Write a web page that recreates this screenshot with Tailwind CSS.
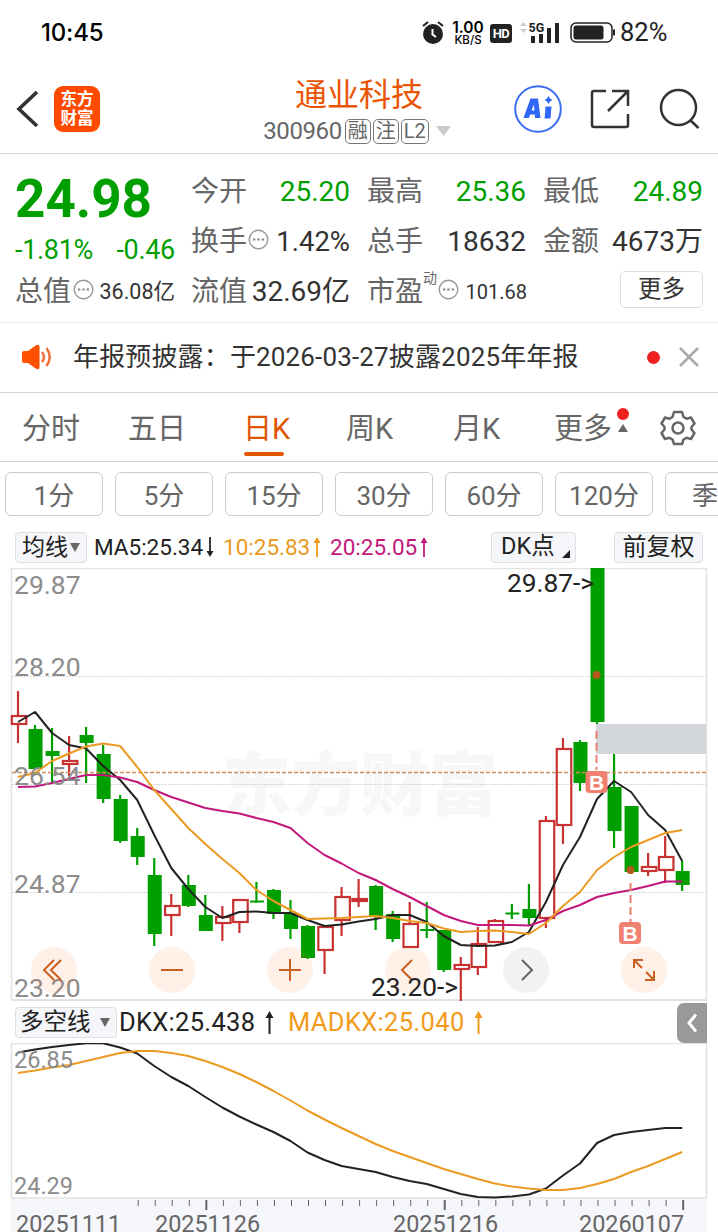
<!DOCTYPE html>
<html lang="zh-CN">

<head>
    <meta charset="UTF-8" />
    <meta name="viewport" content="width=device-width, initial-scale=1.0" />
    <title>通业科技 300960</title>
    <script src="https://cdn.jsdelivr.net/npm/@tailwindcss/browser@4"></script>
    <style>
        body {
            font-family: Roboto, 'Noto Sans CJK SC', sans-serif;
        }
    </style>
</head>

<body class="bg-white w-[718px] h-[1232px] overflow-hidden text-[#333] whitespace-nowrap">
    <!-- status bar -->
    <div class="h-[66px] flex items-center pl-[41px] text-black">
        <span class="font-['Inter'] text-[24px] font-medium w-[380px] leading-none tracking-[-0.2px]">10:45</span>
        <svg class="w-[24px] h-[26px]" viewBox="0 0 24 26">
            <circle cx="12" cy="14" r="10" fill="#222" />
            <path d="M2 6 L7 2 M22 6 L17 2" stroke="#222" stroke-width="2.2" fill="none" />
            <path d="M11.5 9 V14.5 L15 17" stroke="#fff" stroke-width="2" fill="none" />
        </svg>
        <div class="w-[32px] ml-[7px] flex flex-col items-center font-['Inter'] font-semibold">
            <span class="text-[15.5px] leading-[13px]">1.00</span>
            <span class="text-[11.5px] leading-[12px] font-medium">KB/S</span>
        </div>
        <div class="ml-[6px] w-[22px] h-[19px] rounded-[3px] bg-[#222] text-white text-[13px] leading-[20px] font-bold text-center tracking-[-0.5px]">HD</div>
        <svg class="w-[42px] h-[26px] ml-[8px] mb-[2px]" viewBox="0 0 42 26">
            <path d="M0 7 L3.500 3 L7 7Z M0 10 L3.500 14 L7 10Z" fill="#ccc" />
            <path d="M11 17h4v7h-4z M19 15h4v9h-4z M27 9h4v15h-4z M35 4h4v20h-4z" fill="#222" />
            <text x="8.500" y="12.500" font-size="12.500" font-weight="700" font-family="Roboto" fill="#222" stroke="#fff" stroke-width="2" paint-order="stroke">5G</text>
        </svg>
        <svg class="w-[46px] h-[22px] ml-[8px]" viewBox="0 0 46 22">
            <rect x="1" y="1" width="41" height="19" rx="5" fill="none" stroke="#222" stroke-width="1.500" />
            <rect x="3.500" y="3.500" width="30" height="14" rx="2.500" fill="#222" />
            <path d="M44 7.500v6" stroke="#222" stroke-width="2" />
        </svg>
        <span class="ml-[4px] text-[25.500px] leading-none text-[#222]">82%</span>
    </div>

    <!-- header -->
    <header class="h-[88px] flex border-b border-[#d4d4d4]">
        <div class="w-[202px] flex items-center pl-[16px] pb-[2px]">
            <svg class="w-[24px] h-[38px]" viewBox="0 0 24 38">
                <path d="M21 2 L3 19 L21 36" fill="none" stroke="#333" stroke-width="3.600" />
            </svg>
            <div class="ml-[14px] w-[46px] h-[46px] rounded-[9px] bg-[#ff4a00] text-white font-bold text-[16.500px] leading-[19px] text-center pt-[4px]">东方<br />财富</div>
        </div>
        <div class="w-[312px] flex flex-col items-center pt-[10px]">
            <h1 class="text-[32px] leading-[38px] text-[#e95504] ml-[2px]">通业科技</h1>
            <div class="flex items-center mt-[4px] text-[#666] gap-[2px] mr-[2px]">
                <span class="text-[24px] leading-[26px] tracking-[-0.400px] mr-[1px]">300960</span>
                <span class="w-[26px] h-[25px] border border-[#777] rounded-[5px] text-[20px] leading-[22px] text-center">融</span>
                <span class="w-[26px] h-[25px] border border-[#777] rounded-[5px] text-[20px] leading-[22px] text-center">注</span>
                <span class="w-[28px] h-[25px] border border-[#777] rounded-[5px] text-[20px] leading-[23px] text-center">L2</span>
                <svg class="w-[15px] h-[10px] ml-[5px]" viewBox="0 0 15 10"><path d="M0 0h15L7.500 10z" fill="#ccc" /></svg>
            </div>
        </div>
        <div class="flex items-center pb-[2px]">
            <svg class="w-[48px] h-[48px]" viewBox="0 0 48 48">
                <circle cx="24" cy="24" r="22.800" fill="none" stroke="#3b6cf0" stroke-width="2" />
                <path d="M9.500 33 L16.500 13.500 H24 L26.500 33 H21 L20.700 29.500 H16.200 L14.800 33Z M17.500 25.500 H20.400 L20 19.500Z" fill="#2f66f6" fill-rule="evenodd" />
                <path d="M31.500 21.500 H37.500 L36.500 33.500 H30.500 L31 29Z" fill="#2f66f6" />
                <path d="M34.500 11 L36 13.500 L38.500 15 L36 16.500 L34.500 19 L33 16.500 L30.500 15 L33 13.500Z" fill="#2f66f6" />
            </svg>
            <svg class="w-[40px] h-[40px] ml-[28px]" viewBox="0 0 40 40" fill="none" stroke="#333" stroke-width="2.500">
                <path d="M16 2 H4 Q2 2 2 4 V36 Q2 38 4 38 H36 Q38 38 38 36 V25 M22 2 H38 V17 M38 2 L18 22" />
            </svg>
            <svg class="w-[41px] h-[41px] ml-[29px]" viewBox="0 0 41 41" fill="none" stroke="#333" stroke-width="2.500">
                <circle cx="19.500" cy="19.500" r="17.500" />
                <path d="M31 32 L39.500 40" />
            </svg>
        </div>
    </header>

    <!-- quote -->
    <section class="h-[169px] flex border-b border-[#ececec] pl-[15px]">
        <div class="w-[176px]">
            <div class="text-[53px] leading-[50px] pt-[20px] font-bold text-[#009f00]">24.98</div>
            <div class="flex justify-between w-[160px] text-[27px] leading-[30px] pt-[11px] text-[#009f00] tracking-[-0.300px]">
                <span>-1.81%</span><span>-0.46</span>
            </div>
            <div class="flex items-center justify-between w-[160px] h-[40px] mt-[7px]">
                <span class="text-[28px] text-[#666]">总值</span>
                <svg class="w-[21px] h-[21px] -ml-[3px] mb-[6px]" viewBox="0 0 21 21"><circle cx="10.500" cy="10.500" r="9.300" fill="none" stroke="#999" stroke-width="1.400" /><path d="M5 10.500h2.400M9.300 10.500h2.400M13.600 10.500h2.400" stroke="#888" stroke-width="2" /></svg>
                <span class="text-[21.500px]">36.08亿</span>
            </div>
        </div>
        <div class="w-[159px] mr-[17px] pt-[13px] text-[28px] leading-[50px]">
            <div class="flex justify-between h-[50px]"><span class="text-[#666]">今开</span><span class="text-[#009f00]">25.20</span></div>
            <div class="flex justify-between items-center h-[50px]">
                <span class="text-[#666]">换手</span>
                <svg class="w-[21px] h-[21px] -ml-[6px] mb-[6px]" viewBox="0 0 21 21"><circle cx="10.500" cy="10.500" r="9.300" fill="none" stroke="#999" stroke-width="1.400" /><path d="M5 10.500h2.400M9.300 10.500h2.400M13.600 10.500h2.400" stroke="#888" stroke-width="2" /></svg>
                <span class="text-[27.500px]">1.42%</span>
            </div>
            <div class="flex justify-between h-[50px]"><span class="text-[#666]">流值</span><span>32.69亿</span></div>
        </div>
        <div class="w-[159px] mr-[17px] pt-[13px] text-[28px] leading-[50px]">
            <div class="flex justify-between h-[50px]"><span class="text-[#666]">最高</span><span class="text-[#009f00]">25.36</span></div>
            <div class="flex justify-between h-[50px]"><span class="text-[#666]">总手</span><span>18632</span></div>
            <div class="flex items-center h-[50px]">
                <span class="text-[#666]">市盈</span>
                <span class="text-[14px] leading-[20px] text-[#666] mb-[28px]">动</span>
                <svg class="w-[21px] h-[21px] mb-[6px] ml-[1px]" viewBox="0 0 21 21"><circle cx="10.500" cy="10.500" r="9.300" fill="none" stroke="#999" stroke-width="1.400" /><path d="M5 10.500h2.400M9.300 10.500h2.400M13.600 10.500h2.400" stroke="#888" stroke-width="2" /></svg>
                <span class="text-[20px] ml-auto -mr-[1px]">101.68</span>
            </div>
        </div>
        <div class="w-[160px] pt-[13px] text-[28px] leading-[50px]">
            <div class="flex justify-between h-[50px]"><span class="text-[#666]">最低</span><span class="text-[#009f00]">24.89</span></div>
            <div class="flex justify-between h-[50px]"><span class="text-[#666]">金额</span><span>4673万</span></div>
            <div class="ml-auto mt-[4px] w-[83px] h-[37px] rounded-[5px] border border-[#ddd] text-[23.500px] leading-[34px] text-center">更多</div>
        </div>
    </section>

    <!-- notice -->
    <section class="h-[70px] flex items-center border-b border-[#d4d4d4] pl-[21px] pr-[19px] pb-[1px]">
        <svg class="w-[31px] h-[26px]" viewBox="0 0 31 26">
            <path d="M3 7 H7 L14 2 Q18.500 -1 18.500 3 V23 Q18.500 27 14 24 L7 19 H3 Q1 19 1 17 V9 Q1 7 3 7Z" fill="#ff5000" />
            <path d="M21 8 Q25 13 21 18 M25.500 4 Q32 13 25.500 22" fill="none" stroke="#f2703a" stroke-width="2.500" />
        </svg>
        <span class="ml-[21px] text-[26px] leading-none tracking-[0.150px]">年报预披露：于2026-03-27披露2025年年报</span>
        <i class="ml-auto w-[13px] h-[13px] rounded-full bg-[#f02020]"></i>
        <svg class="w-[20px] h-[20px] ml-[19px]" viewBox="0 0 20 20"><path d="M1 1L19 19M19 1L1 19" stroke="#aaa" stroke-width="2.500" /></svg>
    </section>

    <!-- chart tabs -->
    <nav class="h-[69px] flex items-center border-b border-[#d4d4d4] text-[29px] leading-none text-[#666] pl-[22px] pt-[5px]">
        <span class="w-[106px]">分时</span>
        <span class="w-[115px]">五日</span>
        <span class="w-[103px] h-[58px] flex flex-col justify-between text-[#e05500] pt-[14px] pb-[3px]">日K<i class="w-[40px] h-[4px] rounded-full bg-[#e05500] ml-[1px]"></i></span>
        <span class="w-[107px]">周K</span>
        <span class="w-[101px]">月K</span>
        <span>更多</span>
        <div class="ml-[4px] w-[14px] flex flex-col items-center gap-[4px] mb-[20px]">
            <i class="w-[12px] h-[12px] rounded-full bg-[#f02020]"></i>
            <svg class="w-[10px] h-[8px]" viewBox="0 0 10 8"><path d="M0 8h10L5 0z" fill="#666" /></svg>
        </div>
        <svg class="w-[36px] h-[36px] ml-[30px] mb-[4px]" viewBox="0 0 36 36" fill="none" stroke="#666" stroke-width="2.500" stroke-linejoin="round">
            <path d="M14 2 H22 L23.500 7 L26.500 8.700 L31 7.500 L34.500 13.500 L31.500 17 V19.500 L34.500 23 L31 29 L26.500 27.800 L23.500 29.500 L22 34 H14 L12.500 29.500 L9.500 27.800 L5 29 L1.500 23 L4.500 19.500 V17 L1.500 13.500 L5 7.500 L9.500 8.700 L12.500 7Z" />
            <circle cx="18" cy="18" r="5.500" />
        </svg>
    </nav>

    <!-- minute periods -->
    <div class="flex gap-[12px] pl-[5px] pt-[10px] h-[64px] text-[26px] leading-[46px] text-[#666] text-center overflow-hidden">
        <span class="w-[98px] h-[44px] shrink-0 border border-[#ccc] rounded-[6px]">1分</span>
        <span class="w-[98px] h-[44px] shrink-0 border border-[#ccc] rounded-[6px]">5分</span>
        <span class="w-[98px] h-[44px] shrink-0 border border-[#ccc] rounded-[6px]">15分</span>
        <span class="w-[98px] h-[44px] shrink-0 border border-[#ccc] rounded-[6px]">30分</span>
        <span class="w-[98px] h-[44px] shrink-0 border border-[#ccc] rounded-[6px]">60分</span>
        <span class="w-[98px] h-[44px] shrink-0 border border-[#ccc] rounded-[6px]">120分</span>
        <span class="w-[98px] h-[44px] shrink-0 border border-[#ccc] rounded-[6px] text-left pl-[26px]">季K</span>
    </div>

    <!-- moving averages -->
    <div class="h-[42px] flex items-center pl-[15px] text-[22.500px] leading-none text-[#222]">
        <div class="w-[72px] h-[31px] flex items-center border border-[#dedfe3] rounded-[4px] bg-[#f5f6f9] pl-[6px] text-[23px]">均线
            <svg class="w-[10px] h-[9px] ml-[2px]" viewBox="0 0 10 9"><path d="M0 0h10L5 9z" fill="#666" /></svg>
        </div>
        <span class="ml-[7px] w-[112px]">MA5:25.34</span>
        <svg class="w-[8px] h-[20px]" viewBox="0 0 8 20"><path d="M4 0v17" stroke="#222" stroke-width="1.800" /><path d="M0.500 14h7L4 20z" fill="#222" /></svg>
        <span class="ml-[9px] w-[90px] text-[#e89a1e]">10:25.83</span>
        <svg class="w-[8px] h-[20px]" viewBox="0 0 8 20"><path d="M4 20V3" stroke="#f29a1a" stroke-width="1.800" /><path d="M0.500 6h7L4 0z" fill="#f29a1a" /></svg>
        <span class="ml-[9px] w-[90px] text-[#c2187c]">20:25.05</span>
        <svg class="w-[8px] h-[20px]" viewBox="0 0 8 20"><path d="M4 20V3" stroke="#c2187c" stroke-width="1.800" /><path d="M0.500 6h7L4 0z" fill="#c2187c" /></svg>
        <div class="ml-[63px] w-[85px] h-[31px] flex items-center border border-[#dedfe3] rounded-[4px] bg-[#f5f6f9] pl-[9px] text-[23.500px]">DK点
            <svg class="w-[8px] h-[8px] ml-[7px] mt-[13px]" viewBox="0 0 8 8"><path d="M8 0v8H0z" fill="#222" /></svg>
        </div>
        <div class="ml-[38px] w-[89px] h-[31px] leading-[29px] border border-[#dedfe3] rounded-[4px] bg-[#f5f6f9] text-center text-[24px]">前复权</div>
    </div>

    <!-- daily candles, y runs in page units so both panes share one scale -->
    <svg id="kline" class="block w-[718px] h-[433px]" viewBox="0 568 718 433" font-family="Roboto, 'Noto Sans CJK SC', sans-serif">
        <text x="222" y="810" font-size="69" font-weight="900" fill="#f7f7f7">东方财富</text>
        <path d="M11.500 1000V568.500H706.500V1000" fill="none" stroke="#e2e2e2" stroke-width="1.500" />
        <path d="M11 1000H707" stroke="#e2e2e2" stroke-width="2" />
        <path d="M12 676.500H706M12 784.500H706M12 892.500H706" stroke="#ccc" stroke-dasharray="1.500 1.500" />
        <rect x="596" y="724" width="110" height="30" fill="#d3d6db" />
        <g id="candles"></g>
        <path d="M12 772.500H706" stroke="#c98f5c" stroke-width="1.300" stroke-dasharray="4 2" />
        <g id="averages" fill="none" stroke-width="2" stroke-linejoin="round"></g>
        <g font-size="26.500" fill="#8c8c8c">
            <text x="14" y="594">29.87</text>
            <text x="14" y="676">28.20</text>
            <text x="14" y="785">26.54</text>
            <text x="14" y="893">24.87</text>
            <text x="14" y="997">23.20</text>
        </g>
        <g stroke="#e9806f" stroke-width="2" stroke-dasharray="8 4">
            <path d="M596.500 731V770M630.500 883V922" />
        </g>
        <circle cx="596.500" cy="675" r="4" fill="#b3591c" />
        <circle cx="630.500" cy="870" r="4" fill="#b3591c" />
        <g font-size="21" font-weight="700" fill="#fff" text-anchor="middle" font-family="Liberation Sans">
            <rect x="585.500" y="771" width="22" height="22" rx="4" fill="#f08070" />
            <text x="596.500" y="789.500">B</text>
            <rect x="619" y="922" width="22" height="22" rx="4" fill="#f08070" />
            <text x="630" y="940.500">B</text>
        </g>
        <g fill="#ff6a1a" fill-opacity="0.100">
            <circle cx="54" cy="970" r="23" />
            <circle cx="172" cy="970" r="23" />
            <circle cx="290" cy="970" r="23" />
            <circle cx="408" cy="970" r="23" />
            <circle cx="644" cy="970" r="23" />
        </g>
        <circle cx="526" cy="970" r="23" fill="#f2f2f2" />
        <g fill="none" stroke="#c9601f" stroke-width="2">
            <path d="M54 960L44 970L54 980M61 960L51 970L61 980" />
            <path d="M161 970H183M279 970H301M290 959V981" />
            <path d="M412 960L402 970L412 980" />
            <path d="M634 968V960H643M634 960L642 968M646 972L654 980M654 971V980H645" />
            <path d="M522 960L532 970L522 980" stroke="#666" />
        </g>
        <g font-size="26.300" fill="#222">
            <text x="507" y="592">29.87-&gt;</text>
            <text x="371" y="996">23.20-&gt;</text>
        </g>
    </svg>

    <!-- DKX indicator -->
    <div class="h-[42px] flex items-center pl-[15px] pt-[1px] text-[26px] leading-none text-[#222]">
        <div class="w-[102px] h-[31px] flex items-center border border-[#dedfe3] rounded-[4px] bg-[#f5f6f9] pl-[4px] text-[23.500px]">多空线
            <svg class="w-[10px] h-[9px] ml-[9px]" viewBox="0 0 10 9"><path d="M0 0h10L5 9z" fill="#666" /></svg>
        </div>
        <span class="ml-[2px] w-[146px] text-[25.500px] tracking-[0.300px]">DKX:25.438</span>
        <svg class="w-[9px] h-[23px]" viewBox="0 0 9 23"><path d="M4.500 23V3" stroke="#222" stroke-width="2" /><path d="M0.500 7h8L4.500 0z" fill="#222" /></svg>
        <span class="ml-[14px] w-[186px] text-[25.500px] tracking-[0.350px] text-[#f29a1a]">MADKX:25.040</span>
        <svg class="w-[9px] h-[23px]" viewBox="0 0 9 23"><path d="M4.500 23V3" stroke="#f29a1a" stroke-width="2" /><path d="M0.500 7h8L4.500 0z" fill="#f29a1a" /></svg>
        <div class="ml-[194px] w-[30px] h-[40px] rounded-l-[7px] bg-[#999] flex items-center justify-center">
            <svg class="w-[12px] h-[20px]" viewBox="0 0 12 20"><path d="M10 1.500L3 10L10 18.500" fill="none" stroke="#fff" stroke-width="3" /></svg>
        </div>
    </div>
    <svg class="block w-[718px] h-[189px]" viewBox="0 1043 718 189" font-family="Roboto, sans-serif">
        <rect x="11" y="1199" width="696" height="33" fill="#f6f7fa" />
        <rect x="11.500" y="1043.500" width="695" height="154.500" fill="none" stroke="#e2e2e2" stroke-width="1.500" />
        <g id="dkx" fill="none" stroke-width="2" stroke-linejoin="round"></g>
        <g font-size="23.500" fill="#8c8c8c">
            <text x="14" y="1068">26.85</text>
            <text x="14" y="1194">24.29</text>
        </g>
        <g id="ticks" stroke="#666" stroke-width="1"></g>
        <g font-size="23.400" fill="#666">
            <text x="16" y="1231.500">20251111</text>
            <text x="155" y="1231.500">20251126</text>
            <text x="393" y="1231.500">20251216</text>
            <text x="579" y="1231.500">20260107</text>
        </g>
    </svg>

    <script>
        const STEP = 17.03;
        const xAt = i => 18 + STEP * i;

        // [direction, high, body top, body bottom, low]
        const candles = [
            ["r", 691, 715, 725, 743], ["g", 725, 729, 769, 769], ["g", 728, 751, 756, 783], ["r", 736, 760, 765, 776],
            ["g", 727, 735, 743, 783], ["g", 745, 754, 799, 803], ["g", 795, 799, 841, 843], ["g", 828, 836, 857, 865],
            ["g", 858, 875, 934, 946], ["r", 894, 905, 916, 936], ["g", 875, 885, 906, 907], ["g", 895, 915, 931, 931],
            ["r", 906, 916, 924, 941], ["r", 899, 899, 923, 933], ["g", 882, 900.5, 902.5, 903], ["g", 889, 890, 914, 919],
            ["g", 900, 913, 929, 939], ["g", 925, 926, 958, 959], ["r", 925, 926, 951, 974], ["r", 887, 896, 921, 936],
            ["r", 879, 898, 902, 907], ["g", 885, 886, 916, 930], ["g", 911, 914, 939, 942], ["r", 902, 923, 948, 948],
            ["g", 902, 929, 931, 938], ["g", 930, 930, 970, 972], ["r", 957, 964, 970, 1001], ["r", 927, 943, 968, 975],
            ["r", 919, 920, 943, 943], ["g", 904, 912.5, 914.5, 919], ["g", 884, 909, 918, 925], ["r", 816, 820, 919, 928],
            ["r", 738, 748, 826, 844], ["g", 740, 742, 783, 791], ["g", 568, 568, 722, 724], ["g", 754, 787, 831, 848],
            ["g", 806, 806, 872, 874], ["r", 853, 866, 872, 876], ["r", 836, 856, 871, 883], ["g", 861, 871, 885, 891]
        ];

        document.getElementById("candles").innerHTML = candles.map(([dir, high, top, bottom, low], i) => {
            const x = xAt(i);
            if (dir === "g") {
                return `<path d="M${x} ${high}V${low}" stroke="#009f00" stroke-width="2.2" />
                    <rect x="${x - 6.5}" y="${top}" width="14" height="${bottom - top}" fill="#009f00" />`;
            }
            return `<path d="M${x} ${high}V${top}M${x} ${bottom}V${low}" stroke="#c83232" stroke-width="2.2" />
                <rect x="${x - 6.2}" y="${top + 1}" width="14.5" height="${bottom - top - 2}" fill="none" stroke="#c83232" stroke-width="2.2" />`;
        }).join("");

        const line = (points, color) => `<polyline points="${points}" stroke="${color}" />`;
        const daily = (values, color) => line(values.map((y, i) => `${xAt(i)},${y}`).join(" "), color);

        const ma5 = [722, 712, 733, 745, 748.5, 766, 780, 800, 835, 868, 889, 907, 918, 912, 911.5, 913, 913, 920, 926, 924.5,
            921.5, 919, 915, 915, 922, 936, 945, 946, 945.5, 942, 932, 902, 865, 837, 799, 781, 792, 815, 830, 861];
        const ma10 = [777, 773, 761, 753.5, 746.5, 743.5, 746, 767, 790, 809, 828, 844, 859, 873, 890, 901, 910, 919, 918.5, 918,
            917, 916, 918, 921, 923, 928.5, 932, 931, 930.5, 932, 934, 923, 906, 892, 870, 857, 847, 840, 833, 830];
        const ma20 = [787, 786.5, 783, 779, 775, 775, 777.5, 782, 790, 797, 802.5, 808, 811, 813.5, 818, 822, 828, 843, 855, 863.5,
            873, 880, 889, 897, 906, 915, 921, 925, 925, 925, 925.5, 920, 911, 905, 897, 893, 890, 886, 881.5, 881.5];
        document.getElementById("averages").innerHTML =
            daily(ma5, "#222") + daily(ma20, "#c2187c") + daily(ma10, "#eb9a22");

        const dkx = [1052.5, 1049.5, 1047, 1045, 1043.2, 1043.2, 1047.5, 1053.5, 1066, 1077, 1086, 1097, 1107.5, 1116.5, 1124.5, 1132,
            1141, 1152.5, 1160, 1166, 1169, 1172, 1177, 1181, 1184, 1189, 1194, 1197, 1197.5, 1196.5, 1194.5, 1188.5, 1175.5,
            1163.5, 1143, 1135, 1132, 1130, 1128, 1128];
        const madkx = [1073, 1070.5, 1067.5, 1065, 1061, 1057, 1053, 1051, 1051, 1053, 1056, 1061, 1067, 1074, 1082, 1091, 1100.5,
            1110.5, 1119.5, 1128, 1136, 1144, 1151, 1157, 1163, 1169, 1174, 1179, 1183.5, 1186.5, 1188.5, 1190, 1190, 1188, 1184,
            1179, 1172, 1166, 1159, 1152];
        document.getElementById("dkx").innerHTML = daily(dkx, "#222") + daily(madkx, "#eb9a22");

        let ticks = "";
        for (let i = 7; i < 40; i++) {
            const major = i === 11 || i === 25 || i === 39;
            ticks += `<path d="M${xAt(i) + 1} 1200v${major ? 10 : 6}" stroke-width="${major ? 2 : 1}" />`;
        }
        document.getElementById("ticks").innerHTML = ticks;
    </script>
</body>

</html>
